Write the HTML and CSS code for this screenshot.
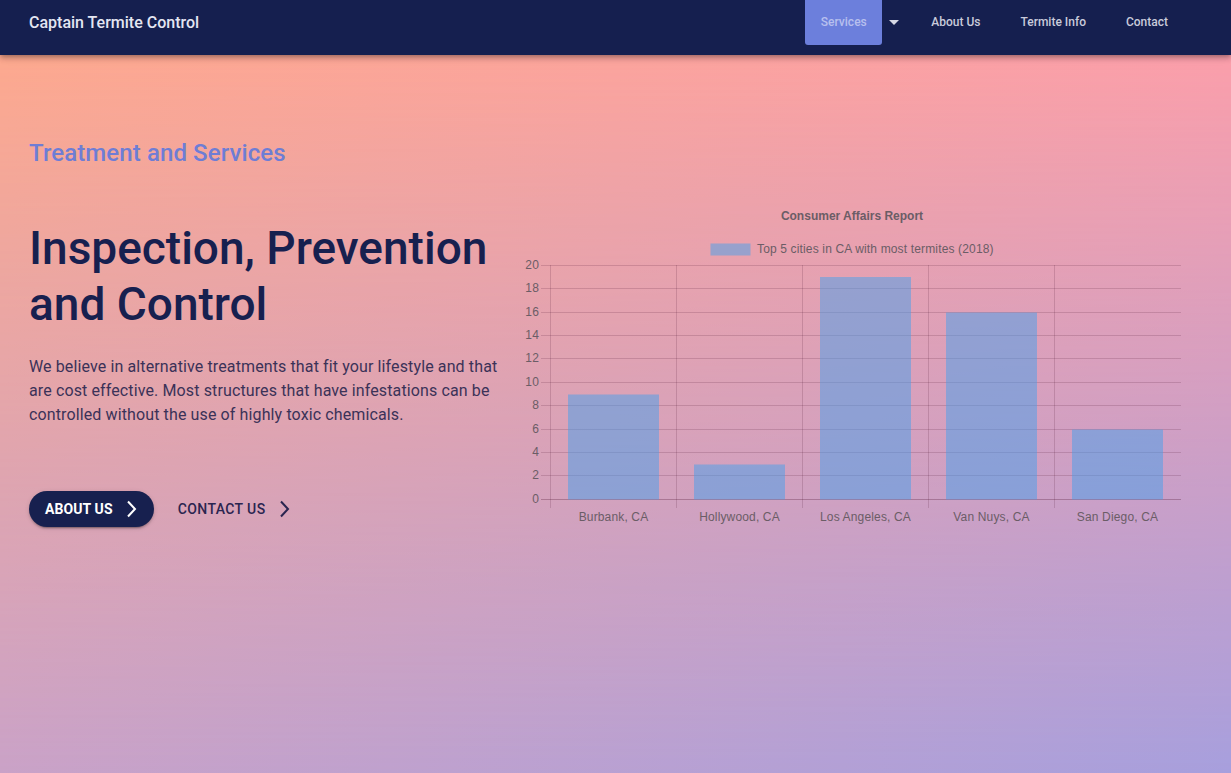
FILE: index.html
```html
<!DOCTYPE html>
<html lang="en">
<head>
<meta charset="utf-8">
<title>Captain Termite Control</title>
<link rel="stylesheet" href="styles.css">
</head>
<body>
<header class="navbar">
  <div class="brand">Captain Termite Control</div>
  <nav class="nav">
    <a class="nav-link active">Services</a>
    <span class="caret"></span>
    <a class="nav-link">About Us</a>
    <a class="nav-link">Termite Info</a>
    <a class="nav-link">Contact</a>
  </nav>
</header>
<main class="hero">
  <h2 class="eyebrow">Treatment and Services</h2>
  <div class="row">
    <div class="left">
      <h1 class="title">Inspection, Prevention and Control</h1>
      <p class="lead">We believe in alternative treatments that fit your lifestyle and that are cost effective. Most structures that have infestations can be controlled without the use of highly toxic chemicals.</p>
      <div class="actions">
        <a class="btn btn-primary">ABOUT US
          <svg class="chev" viewBox="0 0 11 18" width="11" height="18"><path d="M2 1.5 9 9 2 16.5" fill="none" stroke="currentColor" stroke-width="2"/></svg>
        </a>
        <a class="btn btn-text">CONTACT US
          <svg class="chev" viewBox="0 0 11 18" width="11" height="18"><path d="M2 1.5 9 9 2 16.5" fill="none" stroke="currentColor" stroke-width="2"/></svg>
        </a>
      </div>
    </div>
    <div class="chart">
      <svg width="674" height="330" viewBox="0 0 674 330" class="chart-svg">
        <text x="337" y="20" class="c-title" text-anchor="middle">Consumer Affairs Report</text>
        <rect x="195.5" y="43.5" width="40" height="12" class="bar"/>
        <text x="242" y="53" class="c-label">Top 5 cities in CA with most termites (2018)</text>
        <g class="grid">
          <line x1="26" x2="666" y1="65.5" y2="65.5"/>
          <line x1="26" x2="666" y1="88.5" y2="88.5"/>
          <line x1="26" x2="666" y1="112.5" y2="112.5"/>
          <line x1="26" x2="666" y1="135.5" y2="135.5"/>
          <line x1="26" x2="666" y1="158.5" y2="158.5"/>
          <line x1="26" x2="666" y1="182.5" y2="182.5"/>
          <line x1="26" x2="666" y1="205.5" y2="205.5"/>
          <line x1="26" x2="666" y1="229.5" y2="229.5"/>
          <line x1="26" x2="666" y1="252.5" y2="252.5"/>
          <line x1="26" x2="666" y1="275.5" y2="275.5"/>
          <line x1="35.5" x2="35.5" y1="65" y2="308"/>
          <line x1="161.5" x2="161.5" y1="65" y2="308"/>
          <line x1="287.5" x2="287.5" y1="65" y2="308"/>
          <line x1="413.5" x2="413.5" y1="65" y2="308"/>
          <line x1="539.5" x2="539.5" y1="65" y2="308"/>
        </g>
        <line x1="26" x2="666" y1="299.5" y2="299.5" class="axis"/>
        <g class="c-label" text-anchor="end">
          <text x="24" y="69">20</text>
          <text x="24" y="92">18</text>
          <text x="24" y="116">16</text>
          <text x="24" y="139">14</text>
          <text x="24" y="162">12</text>
          <text x="24" y="186">10</text>
          <text x="24" y="209">8</text>
          <text x="24" y="233">6</text>
          <text x="24" y="256">4</text>
          <text x="24" y="279">2</text>
          <text x="24" y="303">0</text>
        </g>
        <g>
          <rect class="bar" x="53" y="194.5" width="91" height="105"/>
          <rect class="bar" x="179" y="264.5" width="91" height="35"/>
          <rect class="bar" x="305" y="77" width="91" height="222.5"/>
          <rect class="bar" x="431" y="112.5" width="91" height="187"/>
          <rect class="bar" x="557" y="229.5" width="91" height="70"/>
        </g>
        <g class="c-label" text-anchor="middle">
          <text x="98.5" y="321">Burbank, CA</text>
          <text x="224.5" y="321">Hollywood, CA</text>
          <text x="350.5" y="321">Los Angeles, CA</text>
          <text x="476.5" y="321">Van Nuys, CA</text>
          <text x="602.5" y="321">San Diego, CA</text>
        </g>
      </svg>
    </div>
  </div>
</main>
</body>
</html>
```

FILE: styles.css
```css
* { box-sizing: border-box; }
html, body { margin: 0; padding: 0; }
body {
  font-family: Roboto, "Liberation Sans", Arial, sans-serif;
  width: 1231px;
  height: 773px;
  overflow: hidden;
  background: #c9a2c8;
}
.navbar {
  position: relative;
  z-index: 2;
  height: 55px;
  background: #151f4f;
  display: flex;
  align-items: flex-start;
  justify-content: space-between;
  padding: 0 29px;
  box-shadow: 0 2px 4px -1px rgba(0,0,0,.2), 0 4px 5px 0 rgba(0,0,0,.14), 0 1px 10px 0 rgba(0,0,0,.12);
}
.brand {
  color: #e4e6f2;
  font-size: 16px;
  font-weight: 500;
  line-height: 45px;
}
.nav {
  display: flex;
  align-items: flex-start;
  margin-right: 14px;
}
.nav-link {
  display: block;
  height: 45px;
  line-height: 44px;
  padding: 0 20px;
  font-size: 12px;
  font-weight: 500;
  color: #c9cbdb;
}
.nav-link.active {
  background: #6c7fdc;
  color: #b7bfee;
  border-radius: 0 0 3px 3px;
  width: 77px;
  text-align: center;
  padding: 0;
}
.caret {
  width: 0;
  height: 0;
  margin: 20px 12px 0 7px;
  border-left: 5px solid transparent;
  border-right: 5px solid transparent;
  border-top: 5px solid #d6d8e6;
}
.hero {
  position: relative;
  height: 718px;
  padding: 82px 29px 0;
  background: linear-gradient(to right, #fda98f, #fb9fab);
}
.hero::before {
  content: "";
  position: absolute;
  inset: 0;
  background: linear-gradient(to right, #caa2c7, #a79fdd);
  -webkit-mask-image: linear-gradient(to bottom, transparent, #000);
  mask-image: linear-gradient(to bottom, transparent, #000);
}
.hero > * { position: relative; }
.eyebrow {
  margin: 0;
  font-size: 24px;
  line-height: 32px;
  font-weight: 500;
  color: #6e7dd5;
  letter-spacing: 0.1px;
}
.row {
  display: flex;
  align-items: flex-start;
  margin-top: 31px;
}
.left {
  width: 486px;
  padding-top: 20px;
}
.title {
  margin: 0;
  font-size: 46px;
  line-height: 56px;
  font-weight: 500;
  color: #17204f;
}
.lead {
  margin: 23px 0 0;
  font-size: 16px;
  line-height: 24px;
  color: #3b3258;
  letter-spacing: 0.12px;
}
.actions {
  display: flex;
  align-items: center;
  margin-top: 64px;
  gap: 8px;
}
.btn {
  display: inline-flex;
  align-items: center;
  height: 36px;
  font-size: 14px;
  font-weight: 700;
  letter-spacing: 0.1px;
  text-transform: uppercase;
}
.btn .chev { margin-left: 13px; }
.btn-primary {
  background: #17204f;
  color: #fff;
  border-radius: 18px;
  padding: 0 17px 0 16px;
  box-shadow: 0 3px 1px -2px rgba(0,0,0,.2), 0 2px 2px 0 rgba(0,0,0,.14), 0 1px 5px 0 rgba(0,0,0,.12);
}
.btn-text {
  color: #2a2550;
  font-weight: 500;
  letter-spacing: 0.4px;
  padding: 0 8px 0 16px;
}
.btn-text .chev { margin-left: 13px; }
.chart-svg { display: block; }
.c-title {
  font-family: "Liberation Sans", Arial, sans-serif;
  font-size: 12px;
  font-weight: 700;
  fill: #6b5d66;
}
.c-label, .c-label text {
  font-family: "Liberation Sans", Arial, sans-serif;
  font-size: 12px;
  letter-spacing: 0.15px;
  fill: #6b5d66;
}
.grid line { stroke: rgba(80,20,50,0.18); stroke-width: 1; }
.axis { stroke: rgba(80,20,50,0.3); stroke-width: 1; }
.bar { fill: rgba(70,160,235,0.5); stroke: none; }
```
